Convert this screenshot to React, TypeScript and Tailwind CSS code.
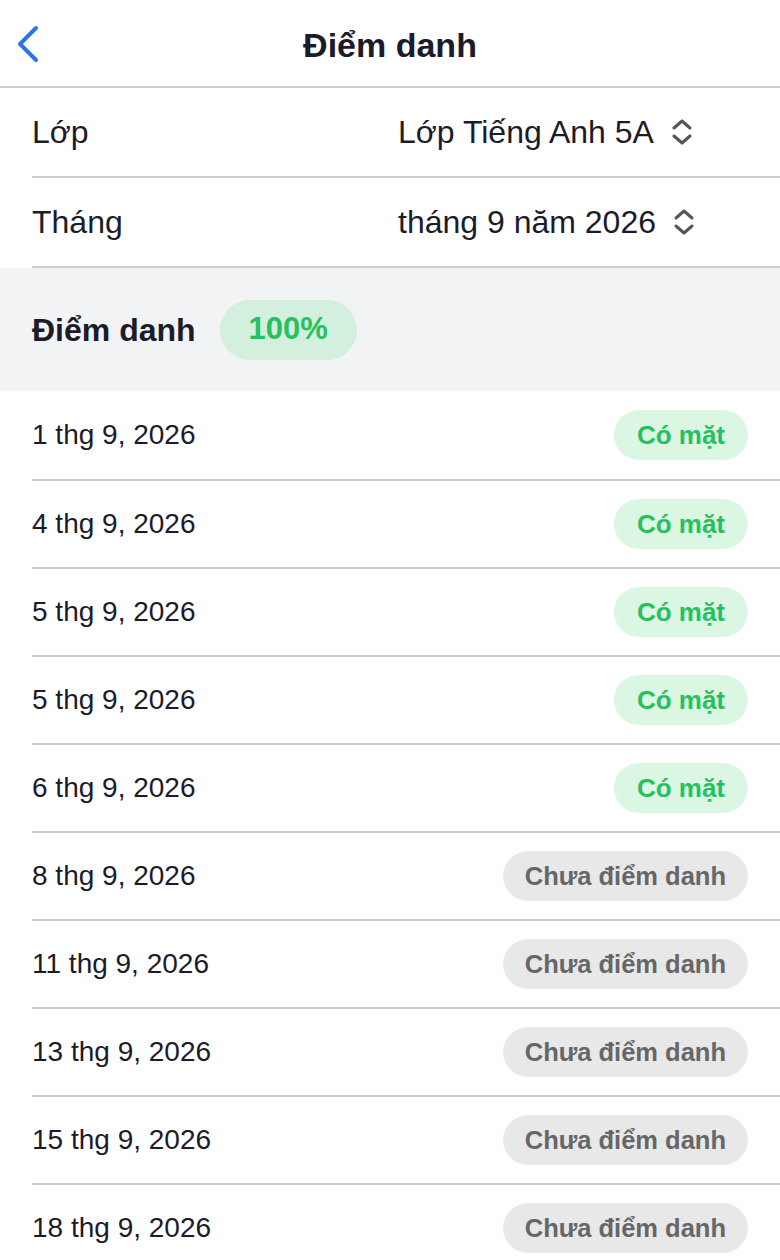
const days = [
  { date: "1 thg 9, 2026", present: true },
  { date: "4 thg 9, 2026", present: true },
  { date: "5 thg 9, 2026", present: true },
  { date: "5 thg 9, 2026", present: true },
  { date: "6 thg 9, 2026", present: true },
  { date: "8 thg 9, 2026", present: false },
  { date: "11 thg 9, 2026", present: false },
  { date: "13 thg 9, 2026", present: false },
  { date: "15 thg 9, 2026", present: false },
  { date: "18 thg 9, 2026", present: false },
];

const UpDown = () => (
  <svg width="24" height="28" viewBox="0 0 24 28" fill="none" stroke="#555" strokeWidth="3" strokeLinecap="round" strokeLinejoin="round">
    <path d="M4 10 L12 3 L20 10" />
    <path d="M4 18 L12 25 L20 18" />
  </svg>
);

const Picker = ({ label, value }: { label: string; value: string }) => (
  <div className="ml-8 flex h-[90px] items-center border-b-2 border-[#cdcdcd]">
    <div className="w-[366px] text-[32px] text-[#1b1b29]">{label}</div>
    <div className="flex items-center gap-4 text-[32px] text-[#1b1b29]">
      <span>{value}</span>
      <UpDown />
    </div>
  </div>
);

export default function App() {
  return (
    <div className="min-h-[1260px] bg-white font-['Liberation_Sans',Arial,sans-serif]">
      <header className="relative flex h-[88px] items-center justify-center border-b-2 border-[#cdcdcd] pt-1">
        <button className="absolute left-[14px] top-[24px]">
          <svg width="28" height="40" viewBox="0 0 28 40" fill="none" stroke="#2f74e6" strokeWidth="4" strokeLinecap="round" strokeLinejoin="round">
            <path d="M22 4 L6 20 L22 36" />
          </svg>
        </button>
        <h1 className="text-[34px] font-bold text-[#1b1b29]">Điểm danh</h1>
      </header>

      <Picker label="Lớp" value="Lớp Tiếng Anh 5A" />
      <Picker label="Tháng" value="tháng 9 năm 2026" />

      <div className="flex h-[123px] items-center gap-6 bg-[#f2f3f5] px-8">
        <span className="text-[32px] font-bold text-[#1b1b29]">Điểm danh</span>
        <span className="flex h-[60px] w-[137px] items-center justify-center rounded-full bg-[#d3efdd] text-[31px] font-bold text-[#27c060]">
          100%
        </span>
      </div>

      <ul>
        {days.map((d, i) => (
          <li
            key={i}
            className={`ml-8 flex items-center justify-between border-b-2 border-[#cdcdcd] pr-8 ${i === 0 ? "h-[90px]" : "h-[88px]"}`}
          >
            <span className="text-[28px] text-[#1b1b29]">{d.date}</span>
            {d.present ? (
              <span className="flex h-[50px] items-center rounded-full bg-[#dcf6e4] px-[23px] text-[26px] font-bold text-[#27c060]">
                Có mặt
              </span>
            ) : (
              <span className="flex h-[50px] items-center rounded-full bg-[#e8e8e8] px-[22px] text-[25.5px] font-bold text-[#666666]">
                Chưa điểm danh
              </span>
            )}
          </li>
        ))}
      </ul>
    </div>
  );
}
